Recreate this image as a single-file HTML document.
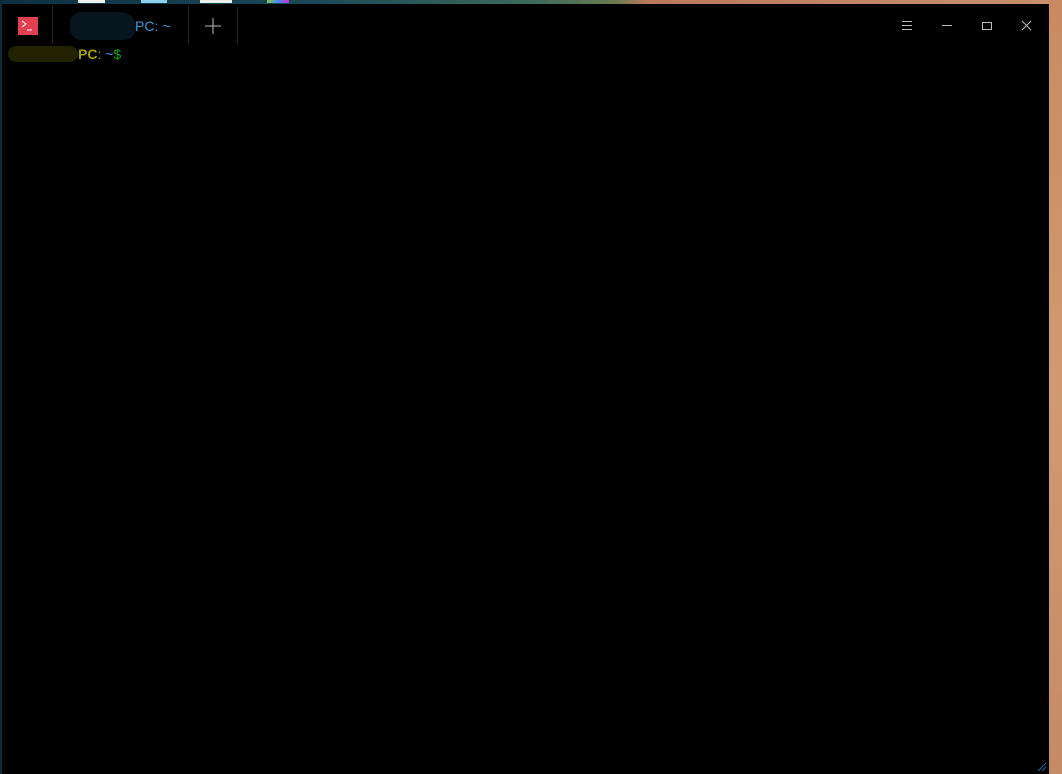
<!DOCTYPE html>
<html><head><style>
html,body{margin:0;padding:0;width:1062px;height:774px;overflow:hidden;position:relative;
background:linear-gradient(90deg,#0d3040 0%,#1a4a58 30%,#3b6a5a 50%,#6a7a50 58%,#b97a5a 61%,#c9906a 100%);}
#right{position:absolute;left:1049px;top:0;width:13px;height:774px;background:linear-gradient(180deg,#c98a62,#d19a72 50%,#c58a66);}
#left{position:absolute;left:0;top:0;width:2px;height:774px;background:#0b2a3a;}
#win{position:absolute;left:2px;top:4px;width:1047px;height:770px;background:#000;font-family:"Liberation Sans",sans-serif;}
.sep{position:absolute;top:2px;width:1px;height:38px;background:#222;}
.t{position:absolute;font-size:14px;}
.ic{position:absolute;stroke:#bbb;fill:none;stroke-width:1}
</style></head><body>
<div id="left"></div><div id="right"></div>
<div style="position:absolute;top:0;left:78px;width:27px;height:3px;background:#eee"></div>
<div style="position:absolute;top:0;left:141px;width:26px;height:3px;background:#8cd0f0"></div>
<div style="position:absolute;top:0;left:200px;width:32px;height:3px;background:#eee"></div>
<div style="position:absolute;top:0;left:267px;width:22px;height:3px;background:linear-gradient(90deg,#8c4,#48f,#c3c)"></div>
<div id="win">
 <div style="position:absolute;left:16px;top:13px;width:20px;height:18px;background:#e04050"></div>
 <svg style="position:absolute;left:16px;top:13px" width="20" height="18" stroke="#fff" fill="none"><path d="M4 4L8 7L4 10M9 13H14"/></svg>
 <div class="sep" style="left:50px"></div>
 <div style="position:absolute;left:68px;top:8px;width:66px;height:28px;background:#07161e;border-radius:14px 20px 16px 14px"></div>
 <div class="t" style="left:133px;top:14px;color:#3a96dd">PC:&nbsp;~</div>
 <div class="sep" style="left:186px"></div>
 <svg class="ic" style="left:202px;top:13px" width="18" height="18"><path d="M9 1V17M1 9H17"/></svg>
 <div class="sep" style="left:235px"></div>
 <svg class="ic" style="left:899px;top:16px" width="12" height="12"><path d="M1 1.5H11M1 5.5H11M1 9.5H11"/></svg>
 <svg class="ic" style="left:939px;top:16px" width="12" height="12"><path d="M1 5.5H11"/></svg>
 <svg class="ic" style="left:979px;top:16px" width="12" height="12"><path d="M1.5 2.5H10.5V9.5H1.5Z"/></svg>
 <svg class="ic" style="left:1019px;top:16px" width="12" height="12"><path d="M1 1L10 10M10 1L1 10"/></svg>
 <div style="position:absolute;left:6px;top:42px;width:70px;height:16px;background:#222200;border-radius:8px"></div>
 <div class="t" style="left:76px;top:42px;color:#a0a000;font-weight:bold">PC<span style="color:#a0a000;font-weight:normal">:</span><span style="color:#3a96dd;font-weight:normal">&nbsp;~</span><span style="color:#13a10e;font-weight:normal">$</span></div>
 <svg style="position:absolute;left:1035px;top:758px" width="10" height="10" stroke="#1e6aa0"><path d="M1 9L9 1M5 9L9 5"/></svg>
</div>
</body></html>
